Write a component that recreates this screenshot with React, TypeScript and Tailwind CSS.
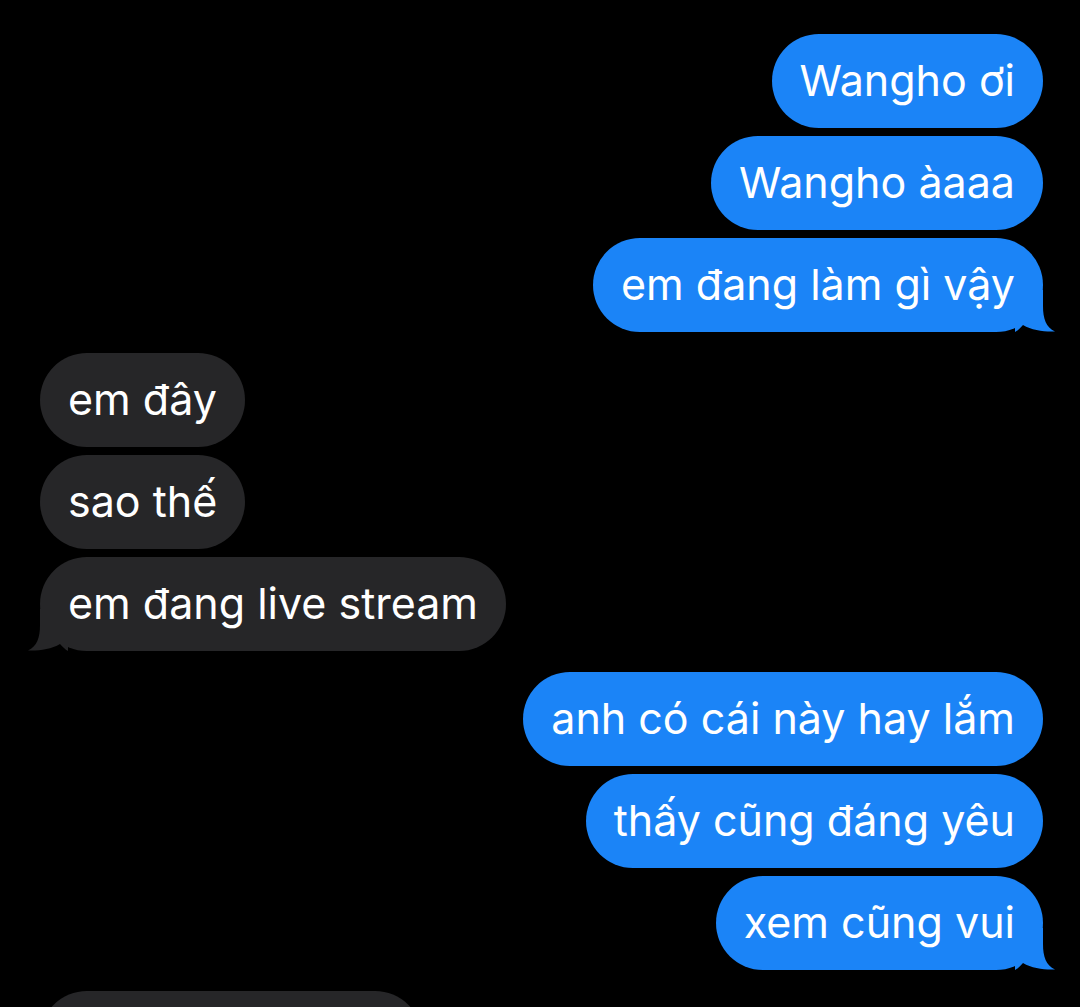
import React from "react";

type Msg = { text: string; tail?: boolean };

const outgoing1: Msg[] = [
  { text: "Wangho ơi" },
  { text: "Wangho àaaa" },
  { text: "em đang làm gì vậy", tail: true },
];

const incoming1: Msg[] = [
  { text: "em đây" },
  { text: "sao thế" },
  { text: "em đang live stream", tail: true },
];

const outgoing2: Msg[] = [
  { text: "anh có cái này hay lắm" },
  { text: "thấy cũng đáng yêu" },
  { text: "xem cũng vui", tail: true },
];

function Tail({ side, color }: { side: "left" | "right"; color: string }) {
  // curved tail at the bottom corner of the last bubble in a group
  return (
    <svg
      width="40"
      height="42"
      viewBox="0 0 40 42"
      className={`absolute bottom-0 ${side === "right" ? "right-[-12px]" : "left-[-12px] -scale-x-100"}`}
    >
      <path
        d="M0 0 H28 V16 C28 29 31 37 40 41.5 C30 42 17 40.5 8 35 C5 38 3 40.5 0 42 Z"
        fill={color}
      />
    </svg>
  );
}

function Bubble({ msg, out }: { msg: Msg; out: boolean }) {
  const color = out ? "#1b84f7" : "#262628";
  return (
    <div
      className={`relative flex h-[94px] items-center rounded-[47px] px-[28px] text-[43px] leading-none text-white ${
        out ? "bg-[#1b84f7]" : "bg-[#262628]"
      }`}
    >
      {msg.tail && <Tail side={out ? "right" : "left"} color={color} />}
      <span className="relative pb-[2px]">{msg.text}</span>
    </div>
  );
}

function Group({ msgs, out }: { msgs: Msg[]; out: boolean }) {
  return (
    <div className={`flex flex-col gap-2 ${out ? "items-end pr-[37px]" : "items-start pl-[40px]"}`}>
      {msgs.map((m, i) => (
        <Bubble key={i} msg={m} out={out} />
      ))}
    </div>
  );
}

export default function App() {
  return (
    <div
      className="flex h-[1007px] flex-col gap-[21px] overflow-hidden bg-black pt-[34px]"
      style={{ fontFamily: "Inter, 'Noto Sans', sans-serif" }}
    >
      <Group msgs={outgoing1} out />
      <Group msgs={incoming1} out={false} />
      <Group msgs={outgoing2} out />
      <div className="pl-[40px]">
        <div className="h-[94px] w-[382px] rounded-[47px] bg-[#262628]" />
      </div>
    </div>
  );
}
